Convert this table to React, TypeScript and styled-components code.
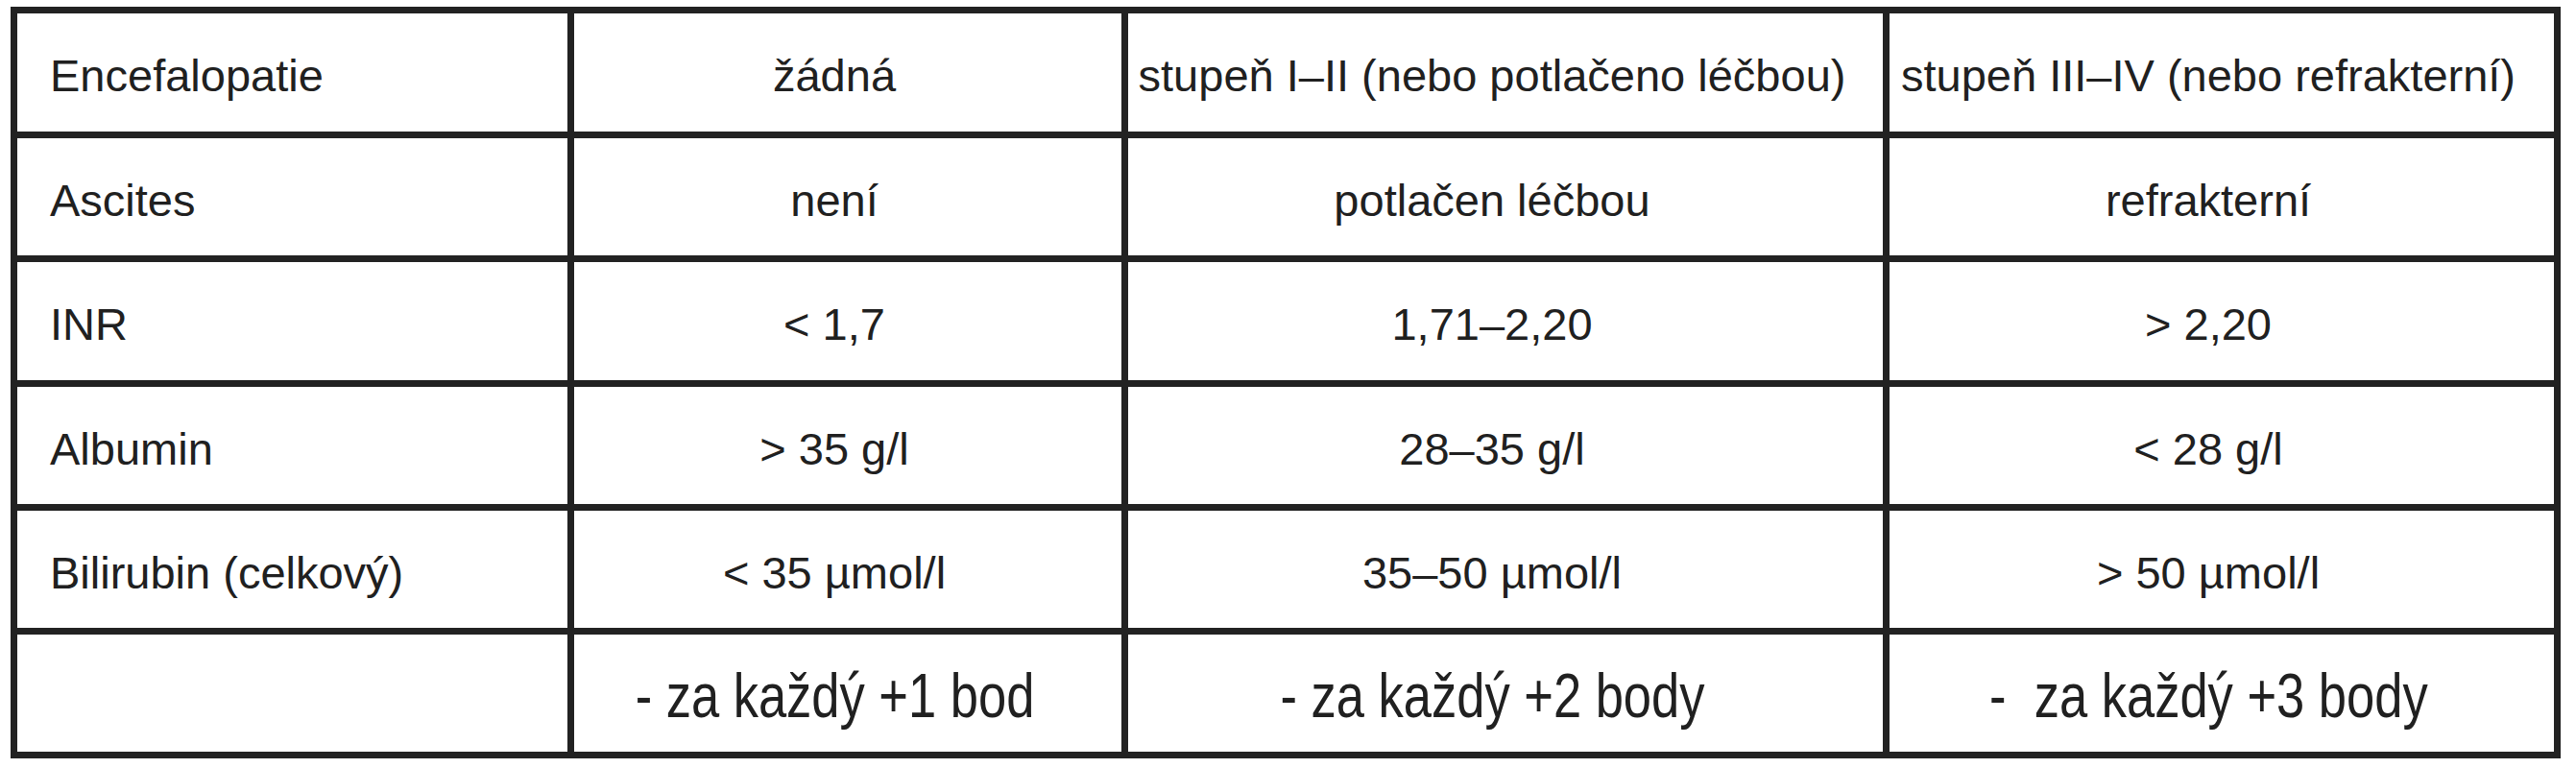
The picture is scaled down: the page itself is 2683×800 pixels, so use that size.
import React from "react";
import styled, { createGlobalStyle } from "styled-components";

const GlobalStyle = createGlobalStyle`
  html, body {
    margin: 0;
    padding: 0;
    background: #ffffff;
  }
  body {
    font-family: "Liberation Sans", Arial, sans-serif;
    color: #202020;
  }
`;

type Row = { cells: string[]; big?: boolean };

const rows: Row[] = [
  {
    cells: [
      "Encefalopatie",
      "žádná",
      "stupeň I–II (nebo potlačeno léčbou)",
      "stupeň III–IV (nebo refrakterní)",
    ],
  },
  { cells: ["Ascites", "není", "potlačen léčbou", "refrakterní"] },
  { cells: ["INR", "< 1,7", "1,71–2,20", "> 2,20"] },
  { cells: ["Albumin", "> 35 g/l", "28–35 g/l", "< 28 g/l"] },
  { cells: ["Bilirubin (celkový)", "< 35 µmol/l", "35–50 µmol/l", "> 50 µmol/l"] },
  {
    cells: ["", "- za každý +1 bod", "- za každý +2 body", "-  za každý +3 body"],
    big: true,
  },
];

const Page = styled.div`
  padding: 7px 0 0 11px;
`;

const Table = styled.div`
  display: grid;
  grid-template-columns: 573px 570px 786px 692px;
  grid-template-rows: 123px 122px 123px 122px 122px 122px;
  gap: 7px;
  padding: 7px;
  width: max-content;
  background: #222222;
`;

const Cell = styled.div<{ $label?: boolean }>`
  background: #ffffff;
  display: flex;
  align-items: center;
  justify-content: ${({ $label }) => ($label ? "flex-start" : "center")};
  padding: ${({ $label }) => ($label ? "6px 0 0 34px" : "6px 28px 0 0")};
  font-size: 47px;
  white-space: pre;
  overflow: hidden;
  color: #202020;
`;

/* the points row is set larger and narrower than the rest */
const PointsText = styled.span`
  display: inline-block;
  font-size: 64px;
  line-height: 1;
  transform: scaleX(0.82);
  transform-origin: center;
`;

export default function App() {
  return (
    <Page>
      <GlobalStyle />
      <Table role="table">
        {rows.map((row, r) =>
          row.cells.map((text, c) => (
            <Cell key={`${r}-${c}`} role="cell" $label={c === 0}>
              {row.big ? <PointsText>{text}</PointsText> : text}
            </Cell>
          ))
        )}
      </Table>
    </Page>
  );
}
